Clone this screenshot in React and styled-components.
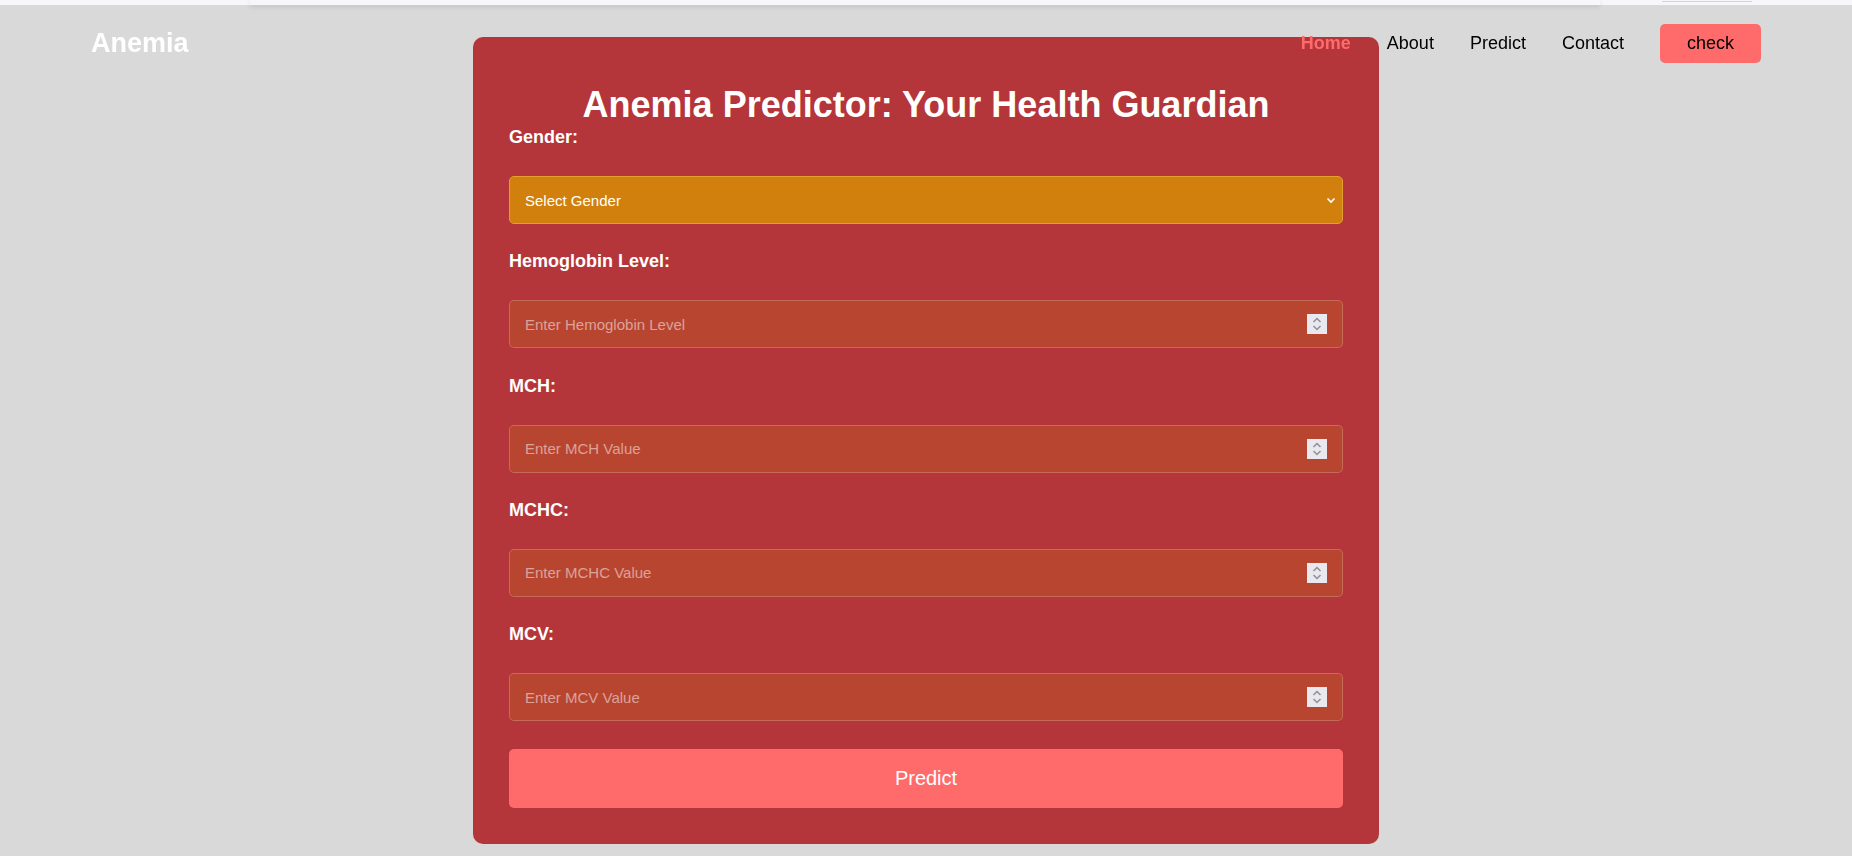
import React from 'react';
import styled, { createGlobalStyle } from 'styled-components';

const Global = createGlobalStyle`
  html, body { margin: 0; padding: 0; }
  body {
    background: #d9d9d9;
    font-family: "Liberation Sans", Arial, sans-serif;
  }
  * { box-sizing: border-box; }
`;

const TopStrip = styled.div`
  height: 5px;
  background: #f7f7f9;
  display: flex;
`;

const StripShadow = styled.div`
  margin-left: 250px;
  width: 1350px;
  height: 5px;
  background: #f7f7f9;
  box-shadow: 0 2px 5px rgba(0, 0, 0, 0.1);
`;

const StripTab = styled.div`
  margin-left: 62px;
  width: 90px;
  height: 2px;
  border-bottom: 1px solid #d4d4d8;
`;

const Navbar = styled.nav`
  position: fixed;
  top: 0;
  left: 0;
  right: 0;
  height: 87px;
  padding: 0 91px;
  display: flex;
  align-items: center;
  justify-content: space-between;
  z-index: 10;
`;

const Logo = styled.div`
  font-size: 27px;
  font-weight: 700;
  color: #ffffff;
`;

const NavLinks = styled.div`
  display: flex;
  align-items: center;
  gap: 36px;
`;

const NavLink = styled.a`
  font-size: 18px;
  text-decoration: none;
  color: ${(p) => (p.$active ? '#ff6b6b' : '#000000')};
  font-weight: ${(p) => (p.$active ? 700 : 400)};
`;

const CheckButton = styled.button`
  height: 39px;
  padding: 0 27px;
  border: none;
  border-radius: 5px;
  background: #ff6b6b;
  color: #000000;
  font-family: inherit;
  font-size: 18px;
  cursor: pointer;
`;

const Main = styled.main`
  display: flex;
  justify-content: center;
  padding-top: 32px;
`;

const Card = styled.div`
  width: 906px;
  padding: 36px;
  background: #b4363a;
  border-radius: 10px;
  color: #ffffff;
`;

const Title = styled.h1`
  margin: 11px 0 1px;
  font-size: 36px;
  font-weight: 700;
  text-align: center;
  line-height: normal;
`;

const Form = styled.form`
  display: flex;
  flex-direction: column;
  gap: 27.3px;
`;

const Group = styled.div`
  display: flex;
  flex-direction: column;
`;

const Label = styled.label`
  display: block;
  margin-bottom: 28px;
  font-size: 18px;
  font-weight: 700;
  line-height: normal;
`;

const FieldWrap = styled.div`
  position: relative;
`;

const Select = styled.select`
  appearance: none;
  -webkit-appearance: none;
  width: 100%;
  height: 48px;
  padding: 0 15px;
  border: 1px solid #e3a02e;
  border-radius: 5px;
  background: #d1800d;
  color: #ffffff;
  font-family: inherit;
  font-size: 15px;
  outline: none;
`;

const Chevron = styled.svg`
  position: absolute;
  right: 7px;
  top: 50%;
  transform: translateY(-50%);
  pointer-events: none;
`;

const Input = styled.input`
  width: 100%;
  height: 48px;
  padding: 0 44px 0 15px;
  border: 1px solid rgba(255, 255, 255, 0.2);
  border-radius: 5px;
  background: #b84530;
  color: #ffffff;
  font-family: inherit;
  font-size: 15px;
  outline: none;
  -moz-appearance: textfield;

  &::placeholder {
    color: rgba(255, 255, 255, 0.5);
  }

  &::-webkit-inner-spin-button,
  &::-webkit-outer-spin-button {
    -webkit-appearance: none;
    margin: 0;
  }
`;

const Spinner = styled.span`
  position: absolute;
  right: 16px;
  top: 14px;
  width: 20px;
  height: 20px;
  background: #e8e8ee;
  display: flex;
  align-items: center;
  justify-content: center;
  pointer-events: none;
`;

const SubmitButton = styled.button`
  margin-top: 1px;
  height: 59px;
  border: none;
  border-radius: 5px;
  background: #ff6b6b;
  color: #ffffff;
  font-family: inherit;
  font-size: 20px;
  cursor: pointer;
`;

const fields = [
  { id: 'hb', label: 'Hemoglobin Level:', placeholder: 'Enter Hemoglobin Level' },
  { id: 'mch', label: 'MCH:', placeholder: 'Enter MCH Value' },
  { id: 'mchc', label: 'MCHC:', placeholder: 'Enter MCHC Value' },
  { id: 'mcv', label: 'MCV:', placeholder: 'Enter MCV Value' },
];

function SpinIcon() {
  return (
    <svg width="12" height="16" viewBox="0 0 12 16">
      <path d="M2.5 6 L6 2.5 L9.5 6" fill="none" stroke="#8f8f9c" strokeWidth="1.5" />
      <path d="M2.5 10 L6 13.5 L9.5 10" fill="none" stroke="#8f8f9c" strokeWidth="1.5" />
    </svg>
  );
}

export default function App() {
  return (
    <>
      <Global />
      <TopStrip>
        <StripShadow />
        <StripTab />
      </TopStrip>
      <Navbar>
        <Logo>Anemia</Logo>
        <NavLinks>
          <NavLink href="#" $active>Home</NavLink>
          <NavLink href="#">About</NavLink>
          <NavLink href="#">Predict</NavLink>
          <NavLink href="#">Contact</NavLink>
          <CheckButton type="button">check</CheckButton>
        </NavLinks>
      </Navbar>
      <Main>
        <Card>
          <Title>Anemia Predictor: Your Health Guardian</Title>
          <Form onSubmit={(e) => e.preventDefault()}>
            <Group>
              <Label htmlFor="gender">Gender:</Label>
              <FieldWrap>
                <Select id="gender" defaultValue="">
                  <option value="">Select Gender</option>
                  <option value="0">Male</option>
                  <option value="1">Female</option>
                </Select>
                <Chevron width="10" height="8" viewBox="0 0 10 8">
                  <path d="M1.5 2.5 L5 6 L8.5 2.5" fill="none" stroke="#ffffff" strokeWidth="1.6" />
                </Chevron>
              </FieldWrap>
            </Group>
            {fields.map((f) => (
              <Group key={f.id}>
                <Label htmlFor={f.id}>{f.label}</Label>
                <FieldWrap>
                  <Input id={f.id} type="number" placeholder={f.placeholder} />
                  <Spinner>
                    <SpinIcon />
                  </Spinner>
                </FieldWrap>
              </Group>
            ))}
            <SubmitButton type="submit">Predict</SubmitButton>
          </Form>
        </Card>
      </Main>
    </>
  );
}
